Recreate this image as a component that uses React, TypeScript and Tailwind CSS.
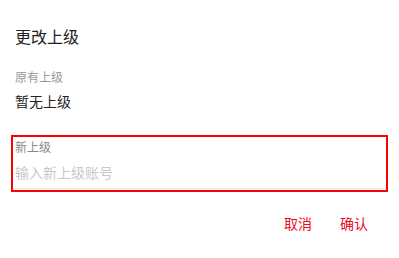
import React from "react";

const font = {
  fontFamily: '"Noto Sans CJK SC", "Noto Sans", sans-serif',
};

export default function App() {
  return (
    <div
      className="w-[399px] h-[258px] bg-white px-[15px] pt-[24px] overflow-hidden"
      style={font}
    >
      <div className="text-[16px] leading-[24px] text-[#222]">更改上级</div>

      <div className="mt-[20px] text-[12px] leading-[18px] text-[#999]">
        原有上级
      </div>
      <div className="mt-[5px] text-[14px] leading-[20px] text-[#222]">
        暂无上级
      </div>

      <div className="mt-[24px] -mx-[4px] border-2 border-[#ff0000] px-[2px] pt-[2px] pb-[1px]">
        <div className="text-[12px] leading-[16px] text-[#888]">新上级</div>
        <div className="border-b border-[#e8e8ea]">
          <input
            className="block w-full h-[33px] text-[14px] leading-[20px] text-[#222] outline-none placeholder:text-[#c8c9cc]"
            placeholder="输入新上级账号"
            style={font}
          />
        </div>
      </div>

      <div className="mt-[21px] flex justify-end gap-[28px] pr-[16px]">
        <button className="text-[14px] leading-[20px] text-[#ee0a24]">取消</button>
        <button className="text-[14px] leading-[20px] text-[#ee0a24]">确认</button>
      </div>
    </div>
  );
}
